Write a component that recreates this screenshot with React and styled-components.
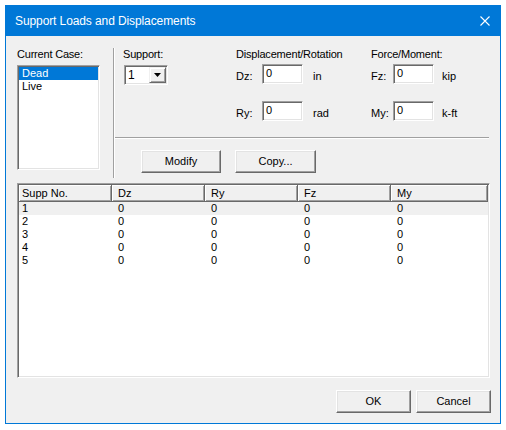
import styled, { createGlobalStyle } from 'styled-components'

const GlobalStyle = createGlobalStyle`
	body {
		margin: 0;
		background: #ffffff;
		font-family: "Liberation Sans", Arial, sans-serif;
		font-size: 11px;
		color: #000000;
	}
`

const columns = [
	{ key: 'no', title: 'Supp No.', width: 93, pad: 3 },
	{ key: 'dz', title: 'Dz', width: 93, pad: 6 },
	{ key: 'ry', title: 'Ry', width: 93, pad: 6 },
	{ key: 'fz', title: 'Fz', width: 93, pad: 6 },
	{ key: 'my', title: 'My', width: 97, pad: 6 },
]

const rows = [1, 2, 3, 4, 5].map((n) => ({ no: n, dz: 0, ry: 0, fz: 0, my: 0 }))

function CloseIcon() {
	return (
		<svg width="10" height="10" viewBox="0 0 10 10">
			<path d="M0.5 0.5 L9.5 9.5 M9.5 0.5 L0.5 9.5" stroke="#ffffff" strokeWidth="1.1" fill="none" />
		</svg>
	)
}

function ArrowDown() {
	return (
		<svg width="7" height="4" viewBox="0 0 7 4">
			<polygon points="0,0 7,0 3.5,4" fill="#000000" />
		</svg>
	)
}

function ValueField({ label, unit, labelWidth, unitGap }) {
	return (
		<FieldRow>
			<FieldLabel width={labelWidth}>{label}</FieldLabel>
			<TextBox>0</TextBox>
			<Unit gap={unitGap}>{unit}</Unit>
		</FieldRow>
	)
}

export default function App() {
	return (
		<>
			<GlobalStyle />
			<Window>
				<TitleBar>
					<Title>Support Loads and Displacements</Title>
					<CloseIcon />
				</TitleBar>
				<Client>
					<Top>
						<CaseColumn>
							<Label>Current Case:</Label>
							<ListBox>
								<ListItem selected>Dead</ListItem>
								<ListItem>Live</ListItem>
							</ListBox>
						</CaseColumn>
						<VLine />
						<RightPanel>
							<Fields>
								<Group width={113}>
									<Label>Support:</Label>
									<Combo>
										<ComboText>1</ComboText>
										<ComboButton>
											<ArrowDown />
										</ComboButton>
									</Combo>
								</Group>
								<Group width={135}>
									<Label>Displacement/Rotation</Label>
									<FieldStack>
										<ValueField label="Dz:" unit="in" labelWidth={26} unitGap={10} />
										<ValueField label="Ry:" unit="rad" labelWidth={26} unitGap={10} />
									</FieldStack>
								</Group>
								<Group>
									<Label>Force/Moment:</Label>
									<FieldStack>
										<ValueField label="Fz:" unit="kip" labelWidth={22} unitGap={8} />
										<ValueField label="My:" unit="k-ft" labelWidth={22} unitGap={8} />
									</FieldStack>
								</Group>
							</Fields>
							<HLine />
							<ActionRow>
								<Button width={80}>Modify</Button>
								<Button width={81}>Copy...</Button>
							</ActionRow>
						</RightPanel>
					</Top>
					<Table>
						<HeaderRow>
							{columns.map((c) => (
								<HeaderCell key={c.key} width={c.width} pad={c.pad}>
									{c.title}
								</HeaderCell>
							))}
						</HeaderRow>
						{rows.map((r, i) => (
							<Row key={r.no} highlighted={i === 0}>
								{columns.map((c) => (
									<Cell key={c.key} width={c.width} pad={c.pad}>
										{r[c.key]}
									</Cell>
								))}
							</Row>
						))}
					</Table>
					<Footer>
						<Button width={75}>OK</Button>
						<Button width={75}>Cancel</Button>
					</Footer>
				</Client>
			</Window>
		</>
	)
}

const sunken = `
	border: 1px solid;
	border-color: #a0a0a0 #ffffff #ffffff #a0a0a0;
	box-shadow: inset 1px 1px 0 #696969, inset -1px -1px 0 #e3e3e3;
`

const Window = styled.div`
	margin: 5px 0 0 5px;
	width: 496px;
	height: 419px;
	box-sizing: border-box;
	border: 1px solid #0078d7;
	background: #f0f0f0;
	display: flex;
	flex-direction: column;
`

const TitleBar = styled.div`
	height: 30px;
	flex: none;
	background: #0078d7;
	color: #ffffff;
	display: flex;
	align-items: center;
	justify-content: space-between;
	padding: 0 10px 0 9px;

	svg {
		margin-top: -1px;
	}
`

const Title = styled.span`
	font-family: "Liberation Sans", Arial, sans-serif;
	font-size: 12px;
	letter-spacing: -0.1px;
	margin-top: -1px;
`

const Client = styled.div`
	flex: 1;
	display: flex;
	flex-direction: column;
	padding: 12px 9px 10px 11px;
`

const Top = styled.div`
	display: flex;
	height: 130px;
`

const CaseColumn = styled.div`
	width: 83px;
	display: flex;
	flex-direction: column;
	gap: 4px;
`

const Label = styled.div`
	height: 13px;
	line-height: 13px;
	letter-spacing: -0.2px;
	white-space: nowrap;
`

const ListBox = styled.div`
	height: 105px;
	box-sizing: border-box;
	background: #ffffff;
	padding: 1px;
	${sunken}
`

const ListItem = styled.div`
	height: 13px;
	line-height: 13px;
	padding-left: 3px;
	background: ${({ selected }) => (selected ? '#0078d7' : 'transparent')};
	color: ${({ selected }) => (selected ? '#ffffff' : '#000000')};
`

const VLine = styled.div`
	margin-left: 13px;
	width: 0;
	border-left: 1px solid #a0a0a0;
	border-right: 1px solid #ffffff;
`

const RightPanel = styled.div`
	flex: 1;
	margin-right: 2px;
	display: flex;
	flex-direction: column;
`

const Fields = styled.div`
	height: 89px;
	display: flex;
	padding-left: 8px;
`

const Group = styled.div`
	width: ${({ width }) => (width ? `${width}px` : 'auto')};
	display: flex;
	flex-direction: column;
	gap: 3px;
`

const Combo = styled.div`
	margin: 1px 0 0 1px;
	width: 44px;
	height: 20px;
	box-sizing: border-box;
	background: #ffffff;
	padding: 1px;
	display: flex;
	${sunken}
`

const ComboText = styled.div`
	flex: 1;
	line-height: 16px;
	padding-left: 2px;
	font-size: 12px;
`

const ComboButton = styled.div`
	width: 17px;
	box-sizing: border-box;
	background: #f0f0f0;
	border: 1px solid;
	border-color: #f0f0f0 #696969 #696969 #f0f0f0;
	box-shadow: inset 1px 1px 0 #ffffff, inset -1px -1px 0 #a0a0a0;
	display: flex;
	align-items: center;
	justify-content: center;
`

const FieldStack = styled.div`
	display: flex;
	flex-direction: column;
	gap: 17px;
`

const FieldRow = styled.div`
	display: flex;
	height: 20px;
`

const FieldLabel = styled.div`
	width: ${({ width }) => width}px;
	padding-top: 6px;
	line-height: 13px;
`

const TextBox = styled.div`
	width: 41px;
	height: 20px;
	box-sizing: border-box;
	background: #ffffff;
	padding: 2px 0 0 3px;
	line-height: 13px;
	${sunken}
`

const Unit = styled.div`
	margin-left: ${({ gap }) => gap}px;
	padding-top: 6px;
	line-height: 13px;
`

const HLine = styled.div`
	height: 0;
	border-top: 1px solid #a0a0a0;
	border-bottom: 1px solid #ffffff;
`

const ActionRow = styled.div`
	display: flex;
	gap: 14px;
	padding-left: 26px;
	margin-top: 11px;
`

const Button = styled.div`
	width: ${({ width }) => width}px;
	height: 23px;
	box-sizing: border-box;
	background: #f0f0f0;
	border: 1px solid;
	border-color: #ffffff #696969 #696969 #ffffff;
	box-shadow: inset -1px -1px 0 #a0a0a0, inset 1px 1px 0 #e3e3e3;
	display: flex;
	align-items: center;
	justify-content: center;
	line-height: 13px;
`

const Table = styled.div`
	margin-top: 5px;
	width: 473px;
	height: 195px;
	box-sizing: border-box;
	background: #ffffff;
	padding: 1px;
	overflow: hidden;
	${sunken}
`

const HeaderRow = styled.div`
	display: flex;
	height: 17px;
`

const HeaderCell = styled.div`
	width: ${({ width }) => width}px;
	box-sizing: border-box;
	background: #f0f0f0;
	border-right: 1px solid #696969;
	border-bottom: 1px solid #696969;
	box-shadow: inset 1px 1px 0 #ffffff, inset -1px -1px 0 #a0a0a0;
	padding: 2px 0 0 ${({ pad }) => pad}px;
	line-height: 13px;
`

const Row = styled.div`
	display: flex;
	height: 13px;
	background: ${({ highlighted }) => (highlighted ? '#f0f0f0' : 'transparent')};
`

const Cell = styled.div`
	width: ${({ width }) => width}px;
	box-sizing: border-box;
	padding-left: ${({ pad }) => pad}px;
	line-height: 13px;
`

const Footer = styled.div`
	margin-top: 12px;
	display: flex;
	justify-content: flex-end;
	gap: 5px;
`
